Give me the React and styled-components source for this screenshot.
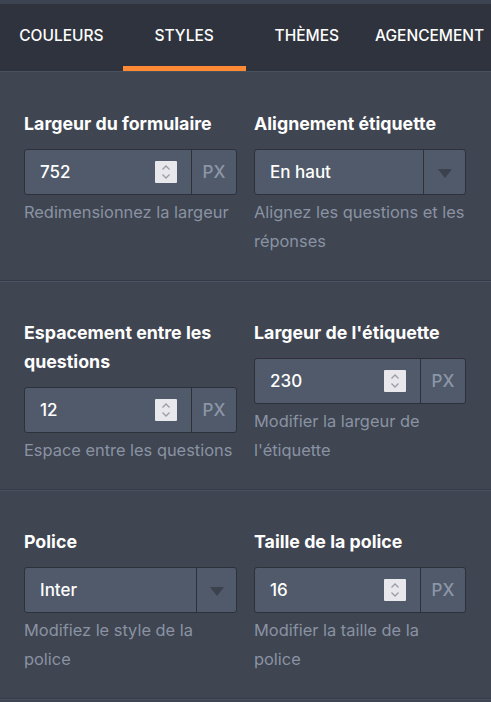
import React from "react";
import styled, { createGlobalStyle } from "styled-components";

const Global = createGlobalStyle`
  html, body { margin: 0; padding: 0; background: #3f4551; }
  body { font-family: Inter, "Noto Sans", "Liberation Sans", sans-serif; -webkit-font-smoothing: antialiased; }
  * { box-sizing: border-box; }
`;

const Page = styled.div`
  min-height: 100vh;
  width: 491px;
  background: #3f4551;
  border-top: 4px solid #3d4451;
`;

const TabBar = styled.div`
  display: grid;
  grid-template-columns: repeat(4, 1fr);
  background: #2f333d;
  height: 68px;
  border-bottom: 1px solid #4a505d;
`;

const Tab = styled.div`
  position: relative;
  display: flex;
  align-items: center;
  justify-content: center;
  padding-bottom: 4px;
  color: #ffffff;
  font-size: 15.5px;
  font-weight: 500;
  white-space: nowrap;
  &::after {
    content: "";
    display: ${(p) => (p.$active ? "block" : "none")};
    position: absolute;
    left: 0;
    right: 0;
    bottom: 0;
    height: 5px;
    background: #ff8a35;
  }
`;

const Section = styled.div`
  display: grid;
  grid-template-columns: 213px 212px;
  column-gap: 17px;
  padding: 37px 24px 24px;
  border-bottom: 1px solid #353a45;
  box-shadow: 0 1px 0 #4b5261;
`;

const Field = styled.div`
  display: flex;
  flex-direction: column;
`;

const Label = styled.div`
  color: #ffffff;
  font-size: 17.8px;
  font-weight: 700;
  line-height: 29px;
  margin-bottom: 11px;
`;

const Box = styled.div`
  display: flex;
  height: 46px;
  background: #505a6a;
  border: 1px solid #2c313a;
  border-radius: 3px;
  overflow: hidden;
`;

const Value = styled.div`
  flex: 1;
  display: flex;
  align-items: center;
  padding: 0 14px 0 15px;
  color: #ffffff;
  font-size: 17px;
  font-weight: 500;
  border-right: 1px solid #2c313a;
`;

const ValueText = styled.span`
  flex: 1;
`;

const Spinner = styled.div`
  width: 22px;
  height: 22px;
  background: #e7e7ec;
  border-radius: 1px;
  display: flex;
  align-items: center;
  justify-content: center;
`;

const Unit = styled.div`
  width: ${(p) => p.$w}px;
  display: flex;
  align-items: center;
  justify-content: center;
  color: #8c96a6;
  font-size: 17px;
  font-weight: 500;
`;

const Caret = styled.div`
  width: 0;
  height: 0;
  border-left: 7px solid transparent;
  border-right: 7px solid transparent;
  border-top: 9px solid #3b414d;
  margin-top: 2px;
`;

const Help = styled.div`
  color: #8a93a3;
  font-size: 16.4px;
  line-height: 29px;
  margin-top: 3px;
`;

const Chevrons = () => (
  <svg width="12" height="18" viewBox="0 0 12 18">
    <path d="M2.5 6.5 L6 3 L9.5 6.5" fill="none" stroke="#9c9ca8" strokeWidth="1.3" />
    <path d="M2.5 11.5 L6 15 L9.5 11.5" fill="none" stroke="#9c9ca8" strokeWidth="1.3" />
  </svg>
);

const NumberInput = ({ value, unitWidth = 44 }) => (
  <Box>
    <Value>
      <ValueText>{value}</ValueText>
      <Spinner>
        <Chevrons />
      </Spinner>
    </Value>
    <Unit $w={unitWidth}>PX</Unit>
  </Box>
);

const SelectInput = ({ value, arrowWidth = 40 }) => (
  <Box>
    <Value>
      <ValueText>{value}</ValueText>
    </Value>
    <Unit $w={arrowWidth}>
      <Caret />
    </Unit>
  </Box>
);

export default function App() {
  return (
    <Page>
      <Global />
      <TabBar>
        <Tab>COULEURS</Tab>
        <Tab $active>STYLES</Tab>
        <Tab>THÈMES</Tab>
        <Tab>AGENCEMENT</Tab>
      </TabBar>

      <Section>
        <Field>
          <Label>Largeur du formulaire</Label>
          <NumberInput value="752" />
          <Help>Redimensionnez la largeur</Help>
        </Field>
        <Field>
          <Label>Alignement étiquette</Label>
          <SelectInput value="En haut" arrowWidth={41} />
          <Help>Alignez les questions et les réponses</Help>
        </Field>
      </Section>

      <Section>
        <Field>
          <Label>Espacement entre les questions</Label>
          <NumberInput value="12" />
          <Help>Espace entre les questions</Help>
        </Field>
        <Field>
          <Label>Largeur de l'étiquette</Label>
          <NumberInput value="230" />
          <Help>Modifier la largeur de l'étiquette</Help>
        </Field>
      </Section>

      <Section>
        <Field>
          <Label>Police</Label>
          <SelectInput value="Inter" arrowWidth={39} />
          <Help>Modifiez le style de la police</Help>
        </Field>
        <Field>
          <Label>Taille de la police</Label>
          <NumberInput value="16" />
          <Help>Modifier la taille de la police</Help>
        </Field>
      </Section>
    </Page>
  );
}
